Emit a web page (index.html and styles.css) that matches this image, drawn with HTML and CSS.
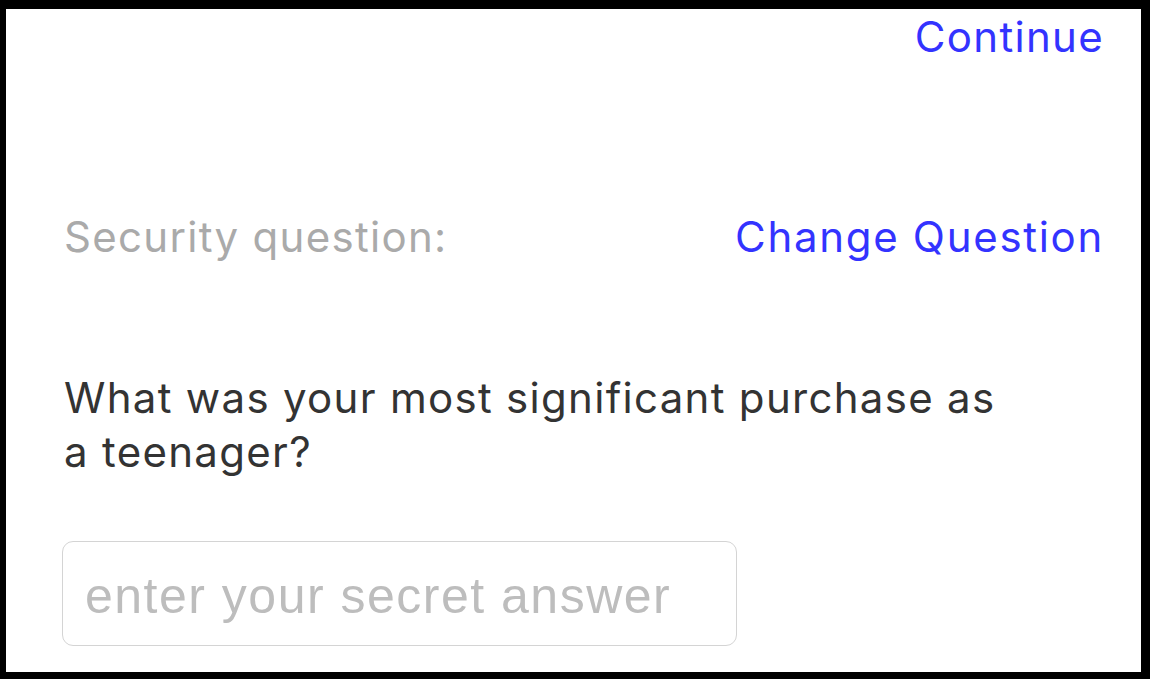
FILE: index.html
```html
<!DOCTYPE html>
<html lang="en">
<head>
<meta charset="utf-8">
<title>Security question</title>
<link rel="stylesheet" href="styles.css">
</head>
<body>
<div class="frame">
  <div class="topbar">
    <a class="link continue" href="#">Continue</a>
  </div>
  <div class="row">
    <span class="label">Security question:</span>
    <a class="link change" href="#">Change Question</a>
  </div>
  <p class="question">What was your most significant purchase as a teenager?</p>
  <div class="answer">
    <input class="answer-input" type="text" placeholder="enter your secret answer">
  </div>
</div>
</body>
</html>
```
FILE: styles.css
```css
html, body {
  margin: 0;
  padding: 0;
  background: #fff;
}
.frame {
  box-sizing: border-box;
  width: 1150px;
  height: 679px;
  border-style: solid;
  border-color: #000;
  border-width: 9px 9px 7px 6px;
  background: #fff;
  padding: 0 37px 0 58px;
  font-family: Inter, "Helvetica Neue", Arial, sans-serif;
  font-size: 42px;
  letter-spacing: 1.3px;
  display: flex;
  flex-direction: column;
  overflow: hidden;
}
.topbar {
  display: flex;
  justify-content: flex-end;
  padding-top: 4px;
  line-height: 48px;
}
.link {
  color: #3333ff;
  text-decoration: none;
}
.row {
  display: flex;
  justify-content: space-between;
  margin-top: 152px;
  line-height: 48px;
}
.change {
  letter-spacing: 1.7px;
}
.label {
  color: #aaaaaa;
}
.question {
  margin: 110px 0 0;
  color: #333333;
  line-height: 54px;
  max-width: 950px;
}
.answer {
  margin-top: 62px;
}
.answer-input {
  box-sizing: border-box;
  width: 675px;
  height: 105px;
  margin-left: -2px;
  border: 1px solid #d4d4d4;
  border-radius: 11px;
  padding: 4px 22px 0;
  font-family: "Helvetica Neue", "Liberation Sans", Arial, sans-serif;
  font-size: 50px;
  letter-spacing: 1.5px;
  color: #333;
  outline: none;
  background: #fff;
}
.answer-input::placeholder {
  color: #bdbdbd;
}
```
